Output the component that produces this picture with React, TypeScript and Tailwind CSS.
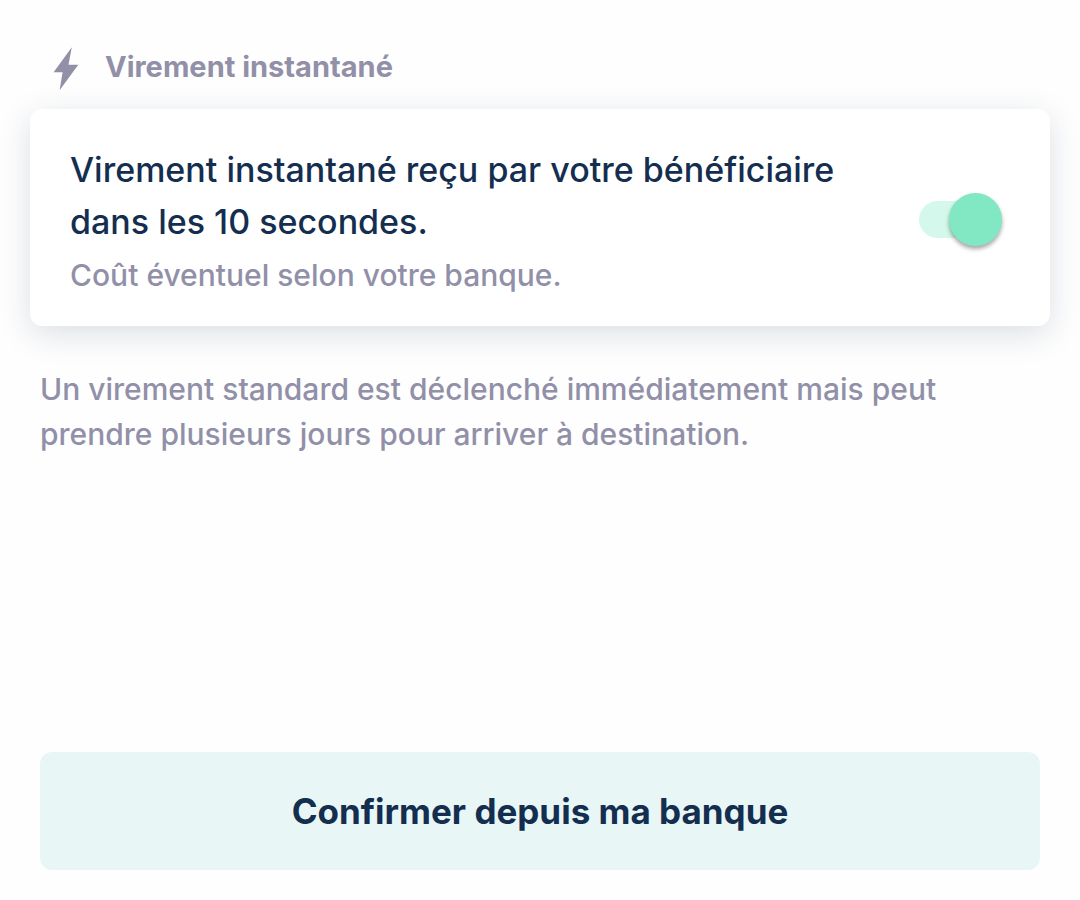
import { useState } from 'react';

const BoltIcon = () => (
  <svg className="h-11 w-[26px] shrink-0" viewBox="0 0 26 44" fill="currentColor" aria-hidden="true">
    <path d="M18.8.3 15.5 17.8H25.3L6.6 43.2 9.6 25.3H.6Z" />
  </svg>
);

type SwitchProps = {
  id: string;
  checked: boolean;
  onChange: (checked: boolean) => void;
};

const Switch = ({ id, checked, onChange }: SwitchProps) => (
  <span className="relative mb-1 flex h-14 w-[83px] shrink-0 items-center">
    <input
      id={id}
      type="checkbox"
      role="switch"
      checked={checked}
      onChange={(e) => onChange(e.target.checked)}
      className="peer absolute inset-0 z-10 cursor-pointer opacity-0"
    />
    <span className="h-[37px] w-18 rounded-full bg-gray-200 peer-checked:bg-[#d5f8ec]" />
    <span className="absolute left-0 h-[53px] w-[53px] rounded-full bg-gray-100 shadow-[0_3px_4px_rgba(0,0,0,0.35)] transition-transform peer-checked:translate-x-[30px] peer-checked:bg-[#82e8c4]" />
  </span>
);

const App = () => {
  const [instant, setInstant] = useState(true);

  return (
    <div className="flex min-h-screen flex-col bg-[#fefefe] px-10 pt-[47px] pb-[30px] font-['Inter',sans-serif] font-medium text-[#9190a8]">
      <header className="flex h-[62px] items-start gap-[26px] pl-[13px]">
        <BoltIcon />
        <h2 className="text-[29px] leading-[40px] font-bold">Virement instantané</h2>
      </header>

      {/* Option card */}
      <section className="-mx-2.5 flex items-center justify-between gap-8 rounded-xl bg-white pt-[35px] pr-12 pb-7 pl-10 shadow-[0_8px_32px_rgba(20,46,80,0.15)]">
        <label htmlFor="instant" className="cursor-pointer">
          <span className="block max-w-[800px] text-[34px] leading-[52px] text-[#142e50]">
            Virement instantané reçu par votre bénéficiaire dans les 10 secondes.
          </span>
          <span className="mt-1 block text-[30px] leading-[46px]">Coût éventuel selon votre banque.</span>
        </label>
        <Switch id="instant" checked={instant} onChange={setInstant} />
      </section>

      <p className="mt-[41px] text-[30px] leading-[45px]">
        Un virement standard est déclenché immédiatement mais peut prendre plusieurs jours pour arriver à destination.
      </p>

      <button
        type="button"
        className="mt-auto w-full cursor-pointer rounded-xl bg-[#e8f7f6] py-8 text-[35px] leading-[54px] font-bold text-[#142e50]"
      >
        Confirmer depuis ma banque
      </button>
    </div>
  );
};

export default App;
